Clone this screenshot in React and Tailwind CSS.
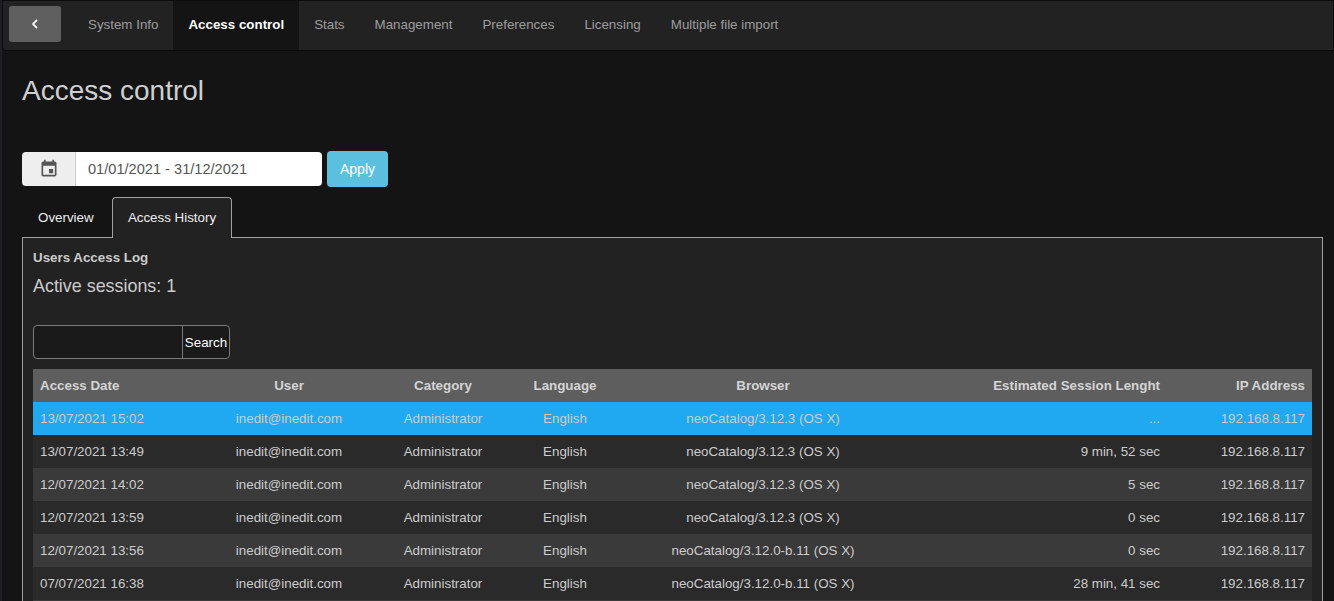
import React from "react";

const NAV = ["System Info", "Access control", "Stats", "Management", "Preferences", "Licensing", "Multiple file import"];

const ROWS = [
  ["13/07/2021 15:02", "neoCatalog/3.12.3 (OS X)", "..."],
  ["13/07/2021 13:49", "neoCatalog/3.12.3 (OS X)", "9 min, 52 sec"],
  ["12/07/2021 14:02", "neoCatalog/3.12.3 (OS X)", "5 sec"],
  ["12/07/2021 13:59", "neoCatalog/3.12.3 (OS X)", "0 sec"],
  ["12/07/2021 13:56", "neoCatalog/3.12.0-b.11 (OS X)", "0 sec"],
  ["07/07/2021 16:38", "neoCatalog/3.12.0-b.11 (OS X)", "28 min, 41 sec"],
];

function rowColor(i) {
  if (i === 0) return "bg-[#20a8f0]";
  return i % 2 === 1 ? "bg-[#2a2a2a]" : "bg-[#3a3a3a]";
}

export default function App() {
  return (
    <div className="h-screen overflow-hidden bg-[#141414] font-['Liberation_Sans',Arial,sans-serif] text-[13.35px] text-[#cccccc] border-l-2 border-[#1c2024]">
      <nav className="h-[51px] flex bg-[#222222] border border-[#0c0c0c] rounded-bl-[4px] pl-[6px]">
        <button className="w-[52px] h-[36px] mt-[5px] mr-[12px] rounded-[3px] bg-[#5f5f5f] flex items-center justify-center">
          <svg width="10" height="12" viewBox="0 0 10 12" fill="none" stroke="#f0f0f0" strokeWidth="1.8"><path d="M7 2 3 6l4 4" /></svg>
        </button>
        {NAV.map((item) => (
          <a key={item} className={item === "Access control" ? "px-[15px] h-[49px] leading-[47px] bg-[#141414] text-white font-bold" : "px-[15px] h-[49px] leading-[47px] text-[#9d9d9d]"}>
            {item}
          </a>
        ))}
      </nav>

      <div className="pl-[20px] pr-[11px]">
        <h2 className="mt-[22px] h-[36px] text-[28px] leading-[36px] text-[#cfcfcf]">Access control</h2>

        <div className="mt-[42px] flex items-center h-[36px]">
          <div className="flex w-[300px] h-[34px] rounded-[4px] overflow-hidden">
            <span className="w-[54px] bg-[#eeeeee] border-r border-[#cccccc] flex items-center justify-center">
              <svg width="20" height="20" viewBox="0 0 24 24" fill="#555555"><path d="M17 12h-5v5h5v-5zM16 1v2H8V1H6v2H5c-1.11 0-1.99.9-1.99 2L3 19c0 1.1.89 2 2 2h14c1.1 0 2-.9 2-2V5c0-1.1-.9-2-2-2h-1V1h-2zm3 18H5V8h14v11z" /></svg>
            </span>
            <span className="flex-1 bg-white text-[#555555] text-[14.6px] leading-[34px] pl-[12px]">01/01/2021 - 31/12/2021</span>
          </div>
          <button className="ml-[5px] w-[61px] h-[36px] rounded-[4px] bg-[#5bc0de] text-white text-[14px]">Apply</button>
        </div>

        <div className="mt-[10px] flex h-[41px]">
          <span className="w-[90px] pl-[16px] pt-[11px] text-[#eeeeee]">Overview</span>
          <span className="w-[120px] border border-b-0 border-[#a0a0a0] rounded-t-[4px] bg-[#222222] text-[#eeeeee] text-center pt-[10px] relative z-10 h-[41px]">Access History</span>
        </div>

        <div className="-mt-px border border-[#a0a0a0] bg-[#222222] px-[10px] pt-[11px]">
          <div className="font-bold leading-[17px]">Users Access Log</div>
          <div className="mt-[8px] text-[17.9px] leading-[24px]">Active sessions: 1</div>

          <div className="mt-[27px] flex w-[197px] h-[34px] border border-[#7a7a7a] rounded-[4px] bg-[#1a1a1a] overflow-hidden">
            <span className="w-[149px] border-r border-[#7a7a7a]" />
            <span className="flex-1 text-center leading-[33px] text-white">Search</span>
          </div>

          <table className="mt-[10px] w-full table-fixed border-collapse">
            <colgroup>
              <col className="w-[172px]" />
              <col className="w-[168px]" />
              <col className="w-[140px]" />
              <col className="w-[104px]" />
              <col className="w-[292px]" />
              <col className="w-[258px]" />
              <col className="w-[145px]" />
            </colgroup>
            <thead>
              <tr className="h-[33px] bg-[#5e5e5e] text-[#d4d4d4]">
                <th className="px-[7px] pt-[2px] text-left font-bold">Access Date</th>
                <th className="px-[7px] pt-[2px] text-center font-bold">User</th>
                <th className="px-[7px] pt-[2px] text-center font-bold">Category</th>
                <th className="px-[7px] pt-[2px] text-center font-bold">Language</th>
                <th className="px-[7px] pt-[2px] text-center font-bold">Browser</th>
                <th className="px-[7px] pt-[2px] text-right font-bold">Estimated Session Lenght</th>
                <th className="px-[7px] pt-[2px] text-right font-bold">IP Address</th>
              </tr>
            </thead>
            <tbody>
              {ROWS.map((row, i) => (
                <tr key={row[0]} className={`h-[33px] ${rowColor(i)}`}>
                  <td className="px-[7px] pt-[2px]">{row[0]}</td>
                  <td className="px-[7px] pt-[2px] text-center">inedit@inedit.com</td>
                  <td className="px-[7px] pt-[2px] text-center">Administrator</td>
                  <td className="px-[7px] pt-[2px] text-center">English</td>
                  <td className="px-[7px] pt-[2px] text-center">{row[1]}</td>
                  <td className="px-[7px] pt-[2px] text-right">{row[2]}</td>
                  <td className="px-[7px] pt-[2px] text-right">192.168.8.117</td>
                </tr>
              ))}
              <tr className="h-[33px] bg-[#3a3a3a]"><td colSpan={7} /></tr>
            </tbody>
          </table>
        </div>
      </div>
    </div>
  );
}
